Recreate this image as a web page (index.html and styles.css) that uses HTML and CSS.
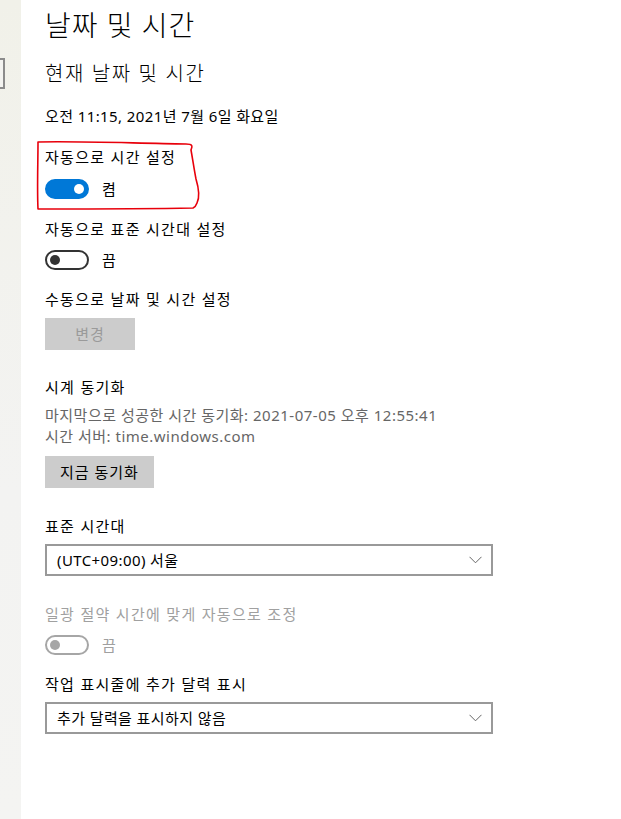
FILE: index.html
```html
<!DOCTYPE html>
<html lang="ko">
<head>
    <meta charset="UTF-8">
    <title>날짜 및 시간</title>
    <link rel="stylesheet" href="styles.css">
</head>
<body>
    <div class="page">
        <div class="sideStrip">
            <div class="searchEdge"></div>
        </div>
        <div class="content">
            <h1 class="pageTitle">날짜 및 시간</h1>
            <h2 class="sectionTitle">현재 날짜 및 시간</h2>
            <p class="nowText">오전 11:15, 2021년 7월 6일 화요일</p>

            <div class="markGroup">
                <p class="label first">자동으로 시간 설정</p>
                <div class="toggleRow firstRow">
                    <span class="toggle on"><span class="knob"></span></span>
                    <span class="toggleText">켬</span>
                </div>
                <!-- 빨간 손글씨 표시 -->
                <svg class="redMark" width="170" height="76" viewBox="0 0 170 76">
                    <path d="M2 3 C40 2 90 4 150 5 C158 5 156 8 155 11 C157 22 158 30 160 40 C163 50 164 58 161 64 C160 67 159 68 157 69 C110 70 60 70 2 70 C1 50 2 25 2 3 Z"
                          fill="none" stroke="#e8000b" stroke-width="1.6" stroke-linejoin="round"/>
                </svg>
            </div>

            <p class="label gapToggle">자동으로 표준 시간대 설정</p>
            <div class="toggleRow">
                <span class="toggle off"><span class="knob"></span></span>
                <span class="toggleText">끔</span>
            </div>

            <p class="label gapRow">수동으로 날짜 및 시간 설정</p>
            <button class="btn disabled">변경</button>

            <p class="label gapBtn">시계 동기화</p>
            <p class="desc first">마지막으로 성공한 시간 동기화: 2021-07-05 오후 12:55:41</p>
            <p class="desc">시간 서버: time.windows.com</p>
            <button class="btn">지금 동기화</button>

            <p class="label gapBlock">표준 시간대</p>
            <div class="select">
                <span>(UTC+09:00) 서울</span>
                <svg class="chevron" width="13" height="8" viewBox="0 0 13 8">
                    <path d="M0.5 0.8 L6.5 6.8 L12.5 0.8" fill="none" stroke="#666" stroke-width="1"/>
                </svg>
            </div>

            <p class="label gapBlock dim">일광 절약 시간에 맞게 자동으로 조정</p>
            <div class="toggleRow">
                <span class="toggle dimmed"><span class="knob"></span></span>
                <span class="toggleText dim">끔</span>
            </div>

            <p class="label gapRow">작업 표시줄에 추가 달력 표시</p>
            <div class="select">
                <span>추가 달력을 표시하지 않음</span>
                <svg class="chevron" width="13" height="8" viewBox="0 0 13 8">
                    <path d="M0.5 0.8 L6.5 6.8 L12.5 0.8" fill="none" stroke="#666" stroke-width="1"/>
                </svg>
            </div>
        </div>
    </div>
</body>
</html>
```

FILE: styles.css
```css
* {
    padding: 0;
    margin: 0;
    box-sizing: border-box;
}

body {
    width: 621px;
    height: 819px;
    overflow: hidden;
    background-color: #fff;
    color: #000;
    font-family: "Noto Sans", "Noto Sans CJK KR", sans-serif;
    font-size: 15px;
}

div.page {
    display: flex;
    height: 819px;
}

div.sideStrip {
    width: 21px;
    flex: none;
    overflow: hidden;
    padding-top: 58px;
    background: linear-gradient(#f1f1e9, #f3f3f2 60%, #f4f4f2);
}

div.sideStrip div.searchEdge {
    width: 60px;
    height: 31px;
    margin-left: -55px;
    border: 2px solid #8b8b8b;
    background-color: #f3f3f0;
}

div.content {
    flex: 1;
    padding: 7px 0 0 24px;
}

h1.pageTitle {
    font-size: 28px;
    font-weight: 300;
    line-height: 36px;
    letter-spacing: 1px;
}

h2.sectionTitle {
    margin-top: 17px;
    font-size: 20px;
    font-weight: 300;
    line-height: 28px;
    letter-spacing: 1.6px;
}

p.nowText {
    margin-top: 18px;
    line-height: 20px;
    font-size: 15px;
    letter-spacing: 0.4px;
}

p.label {
    line-height: 20px;
    font-size: 15px;
    letter-spacing: 1.3px;
}

p.label.first {
    margin-top: 21px;
}

p.label.gapToggle {
    margin-top: 20px;
}

p.label.gapRow {
    margin-top: 19px;
}

p.label.gapBtn {
    margin-top: 27px;
}

p.label.gapBlock {
    margin-top: 28px;
}

.dim {
    color: #a0a0a0;
}

div.markGroup {
    position: relative;
}

svg.redMark {
    position: absolute;
    left: -9px;
    top: -8px;
}

div.toggleRow {
    display: flex;
    align-items: center;
    gap: 13px;
    margin-top: 11px;
    height: 20px;
}

div.toggleRow.firstRow {
    margin-top: 12px;
}

span.toggle {
    display: flex;
    align-items: center;
    width: 44px;
    height: 20px;
    border-radius: 10px;
    border: 2px solid #333;
    padding: 0 3px;
}

span.toggle span.knob {
    width: 10px;
    height: 10px;
    border-radius: 50%;
    background-color: #333;
}

span.toggle.on {
    background-color: #0078d7;
    border-color: #0078d7;
    justify-content: flex-end;
}

span.toggle.on span.knob {
    background-color: #fff;
}

span.toggle.dimmed {
    border-color: #a6a6a6;
}

span.toggle.dimmed span.knob {
    background-color: #a6a6a6;
}

span.toggleText {
    font-size: 15px;
    line-height: 20px;
}

button.btn {
    display: block;
    margin-top: 9px;
    min-width: 90px;
    height: 32px;
    padding: 0 15px 1px;
    border: none;
    background-color: #ccc;
    color: #000;
    font-family: inherit;
    font-size: 15px;
    letter-spacing: 1px;
}

button.btn.disabled {
    color: #9a9a9a;
}

p.desc {
    line-height: 21px;
    font-size: 15px;
    color: #666;
    letter-spacing: 0.5px;
}

p.desc.first {
    margin-top: 8px;
}

div.select {
    display: flex;
    align-items: center;
    justify-content: space-between;
    width: 448px;
    height: 32px;
    margin-top: 8px;
    padding: 0 9px 2px 10px;
    border: 2px solid #999;
    font-size: 15px;
    letter-spacing: 0.4px;
}

svg.chevron {
    display: block;
    margin-top: 2px;
}
```
